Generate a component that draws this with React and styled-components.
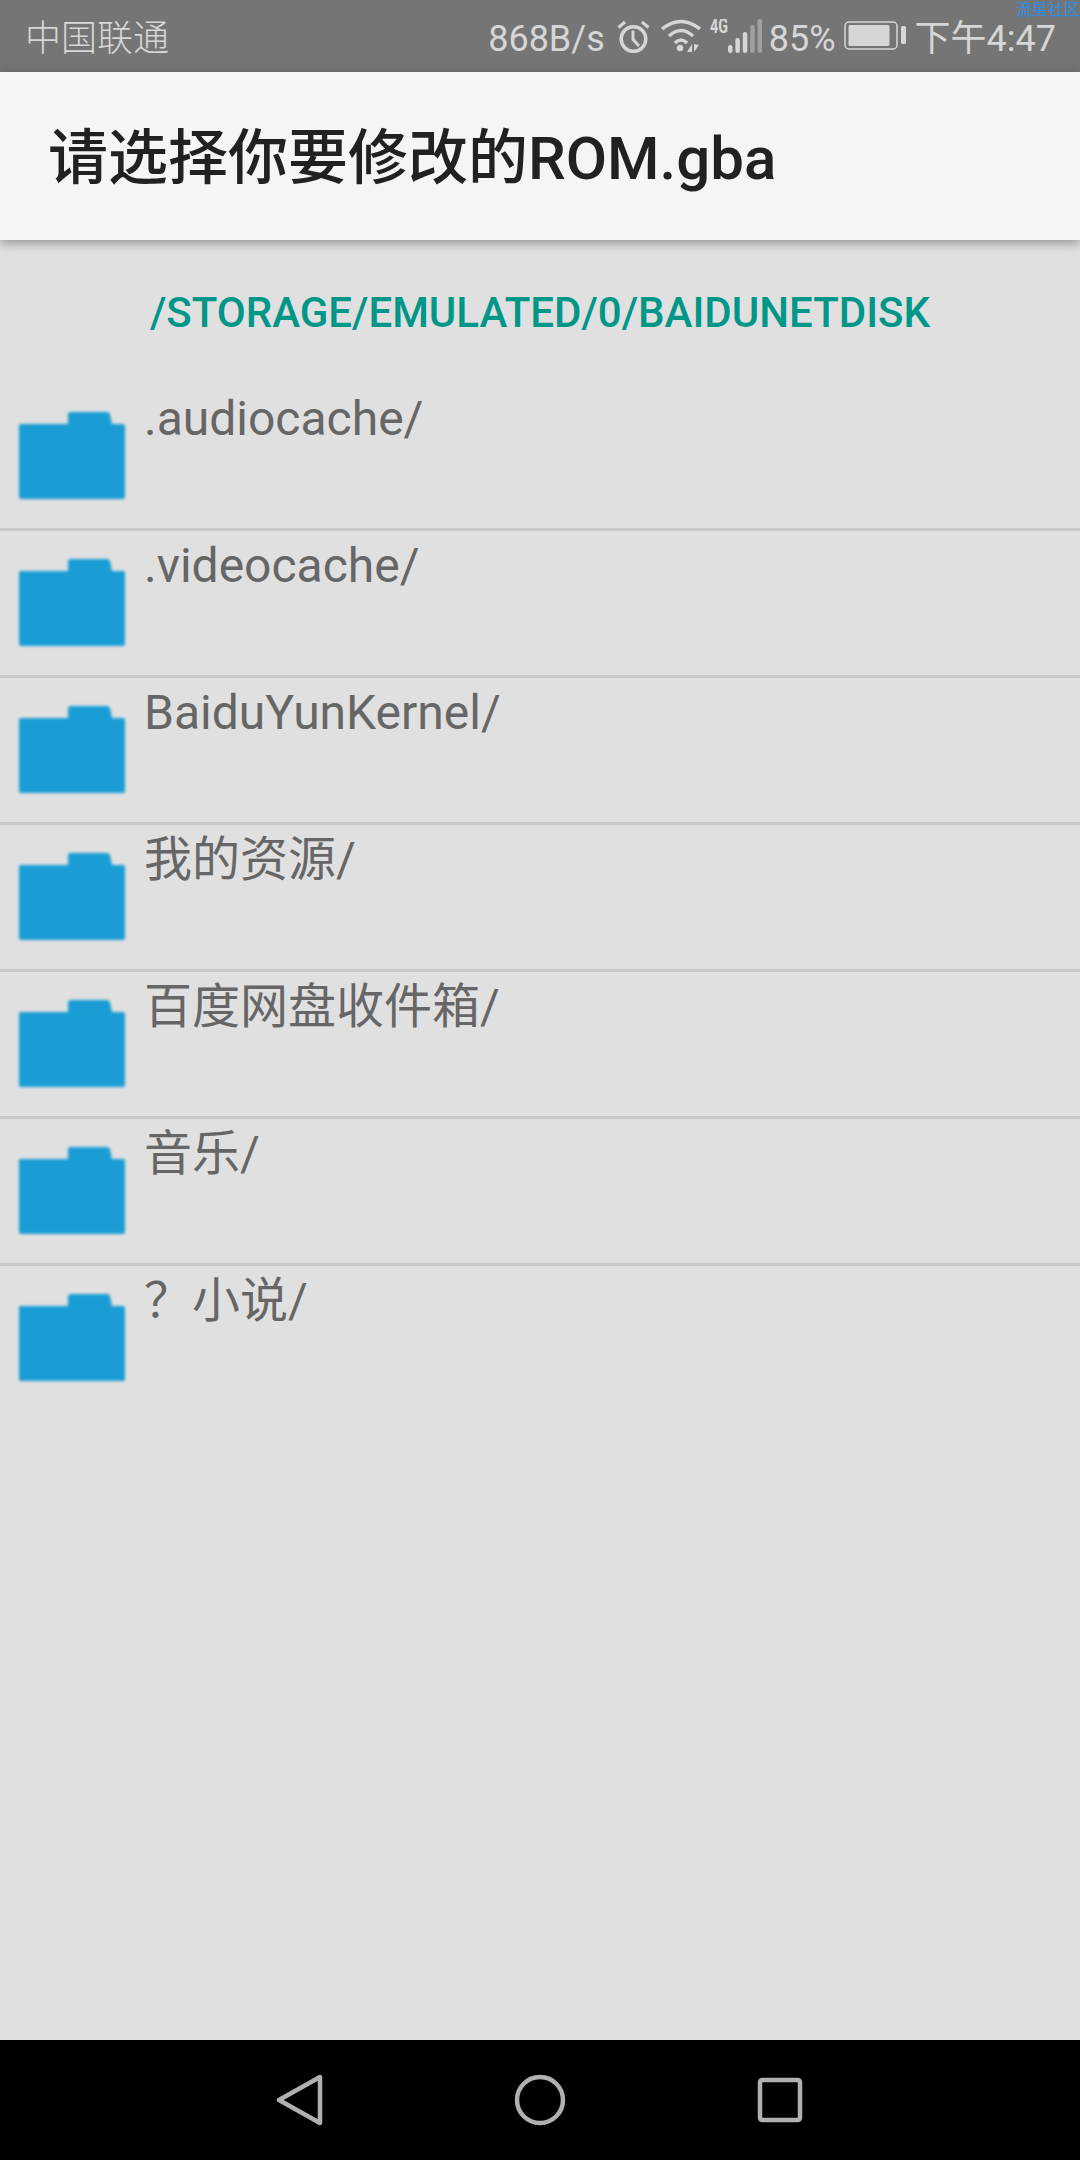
import React from 'react'
import styled, { createGlobalStyle } from 'styled-components'

const GlobalStyle = createGlobalStyle`
  html, body { margin: 0; padding: 0; background: #e0e0e0; }
  body { font-family: Roboto, "Noto Sans CJK SC", sans-serif; }
`

const Screen = styled.div`
  width: 1080px;
  height: 2160px;
  display: flex;
  flex-direction: column;
  background: #e0e0e0;
  overflow: hidden;
`

const StatusBar = styled.div`
  position: relative;
  height: 72px;
  box-sizing: border-box;
  flex: none;
  display: flex;
  align-items: center;
  justify-content: space-between;
  padding: 0 24px 0 25px;
  background: #757575;
  color: #d6d6d6;
  font-size: 36px;
`

const Carrier = styled.span`
  margin-bottom: 3px;
  font-family: "Noto Sans CJK SC", sans-serif;
  font-weight: 300;
`

const StatusRight = styled.div`
  display: flex;
  align-items: center;
`

const StatusText = styled.span`
  margin-left: ${p => p.$left || 0}px;
  margin-top: 5px;
  font-family: Roboto, "Noto Sans CJK SC", sans-serif;
  font-weight: 400;
  line-height: 44px;
`

const StatusIcon = styled.svg`
  flex: none;
  margin-left: ${p => p.$left || 0}px;
`

const Watermark = styled.span`
  position: absolute;
  top: 0;
  right: 0;
  font-family: "Noto Sans CJK SC", sans-serif;
  font-size: 16px;
  line-height: 16px;
  color: #2b8fe6;
`

const TitleBar = styled.div`
  position: relative;
  height: 168px;
  box-sizing: border-box;
  flex: none;
  display: flex;
  align-items: center;
  padding: 0 0 7px 48px;
  background: #f5f5f5;
  color: #212121;
  font-size: 60px;
  font-weight: 500;
  box-shadow: 0 3px 10px rgba(0, 0, 0, 0.35);
`

const PathLabel = styled.div`
  height: 144px;
  flex: none;
  box-sizing: border-box;
  padding-top: 46px;
  text-align: center;
  color: #009688;
  font-size: 42px;
  line-height: 54px;
  font-weight: 500;
  text-transform: uppercase;
`

const FileList = styled.div`
  flex: 1;
`

const Row = styled.div`
  height: 147px;
  box-sizing: border-box;
  display: flex;
  padding-left: 18px;
  border-bottom: ${p => (p.$last ? 'none' : '3px solid #c8c8c8')};
`

const FolderIcon = styled.svg`
  width: 108px;
  height: 90px;
  margin-top: 27px;
  flex: none;
  filter: blur(1.8px);
`

const FileName = styled.div`
  margin: 5px 0 0 18px;
  color: #666;
  font-size: 48px;
  line-height: 60px;
`

const NavBar = styled.div`
  height: 120px;
  flex: none;
  display: flex;
  align-items: center;
  justify-content: center;
  gap: 188px;
  background: #000;
`

const NavIcon = styled.svg`
  width: 52px;
  height: 52px;
  fill: none;
  stroke: #b0b0b0;
  stroke-width: 4.5;
  stroke-linejoin: round;
`

const folders = [
  '.audiocache/',
  '.videocache/',
  'BaiduYunKernel/',
  '我的资源/',
  '百度网盘收件箱/',
  '音乐/',
  '？小说/',
]

const Folder = () => (
  <FolderIcon viewBox="0 0 108 90">
    <path
      d="M2 13 H50 V3 Q50 1 53 1 H89 Q91 1 92 3 L94 13 H105 Q107 13 107 15 V86 Q107 88 105 88 H3 Q1 88 1 86 V15 Q1 13 2 13 Z"
      fill="#1a9dd5"
    />
  </FolderIcon>
)

const Alarm = () => (
  <StatusIcon $left={12} width="33" height="33" viewBox="0 0 33 33" fill="none" stroke="#d6d6d6" strokeWidth="3.5">
    <circle cx="16.5" cy="19" r="12.3" />
    <path d="M16 10.5 V19.5 L22 26" strokeWidth="3" />
    <path d="M1.5 7.5 L8 2 M31.5 7.5 L25 2" strokeWidth="3" />
  </StatusIcon>
)

const Wifi = () => (
  <StatusIcon $left={11} width="40" height="34" viewBox="0 0 40 34" fill="none" stroke="#d6d6d6" strokeWidth="3.5">
    <path d="M1 10 Q20 -5 39 10" />
    <path d="M8 17 Q20 6 32 17" />
    <path d="M14 24 Q20 18 26 24" />
    <circle cx="19" cy="29" r="3.2" fill="#d6d6d6" stroke="none" />
    <path d="M31 25 V33 H26 Z M33 25 V33 L38 26 Z" fill="#d6d6d6" stroke="none" />
  </StatusIcon>
)

const Signal = () => (
  <StatusIcon $left={9} width="52" height="34" viewBox="0 0 52 34">
    <text x="0" y="14" fontFamily="Roboto" fontWeight="700" fontSize="20" fill="#d6d6d6" textLength="18" lengthAdjust="spacingAndGlyphs">4G</text>
    <rect x="18" y="26" width="4.5" height="8" rx="2.2" fill="#d6d6d6" />
    <rect x="25.4" y="19" width="4.5" height="15" rx="2.2" fill="#d6d6d6" />
    <rect x="32.8" y="13" width="4.5" height="21" rx="2.2" fill="#d6d6d6" />
    <rect x="40.2" y="6" width="4.5" height="28" rx="2.2" fill="#a0a0a0" />
    <rect x="47.5" y="0" width="4.5" height="34" rx="2.2" fill="#a0a0a0" />
  </StatusIcon>
)

const Battery = () => (
  <StatusIcon $left={8} width="62" height="30" viewBox="0 0 62 30">
    <rect x="1" y="1" width="52" height="27" rx="4" fill="none" stroke="#d6d6d6" strokeWidth="1.5" />
    <rect x="4.5" y="4" width="41" height="21" rx="1.5" fill="#d6d6d6" />
    <rect x="57" y="5" width="5" height="18" rx="1.5" fill="#d6d6d6" />
  </StatusIcon>
)

const App = () => (
  <Screen>
    <GlobalStyle />
    <StatusBar>
      <Watermark>流星社区</Watermark>
      <Carrier>中国联通</Carrier>
      <StatusRight>
        <StatusText>868B/s</StatusText>
        <Alarm />
        <Wifi />
        <Signal />
        <StatusText $left={7}>85%</StatusText>
        <Battery />
        <StatusText $left={9}>下午4:47</StatusText>
      </StatusRight>
    </StatusBar>
    <TitleBar>请选择你要修改的ROM.gba</TitleBar>
    <PathLabel>/storage/emulated/0/BaiduNetdisk</PathLabel>
    <FileList>
      {folders.map((name, i) => (
        <Row key={name} $last={i === folders.length - 1}>
          <Folder />
          <FileName>{name}</FileName>
        </Row>
      ))}
    </FileList>
    <NavBar>
      <NavIcon viewBox="0 0 52 52">
        <path d="M46 3 V49 L5 26 Z" />
      </NavIcon>
      <NavIcon viewBox="0 0 52 52">
        <circle cx="26" cy="26" r="23" />
      </NavIcon>
      <NavIcon viewBox="0 0 52 52">
        <rect x="6" y="6" width="40" height="40" rx="2" />
      </NavIcon>
    </NavBar>
  </Screen>
)

export default App
